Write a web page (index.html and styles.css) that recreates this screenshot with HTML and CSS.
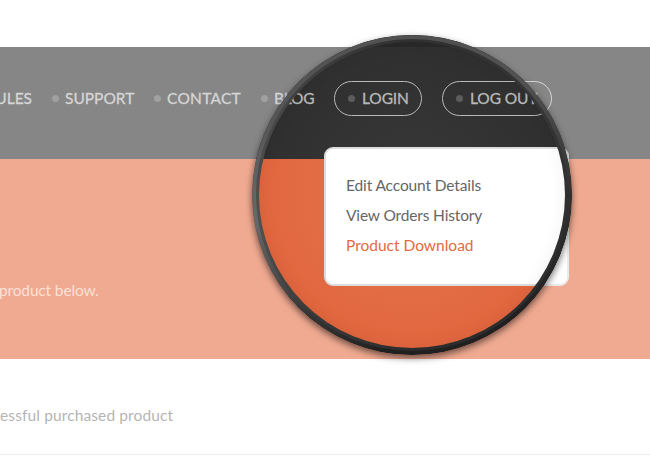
FILE: index.html
```html
<!DOCTYPE html>
<html lang="en">
<head>
<meta charset="utf-8">
<title>Product Download</title>
<link rel="stylesheet" href="styles.css">
</head>
<body>
<div class="page">
  <header class="header">
    <nav class="nav">
      <a class="item modules"><span>MODULES</span></a>
      <a class="item support"><i class="dot"></i><span>SUPPORT</span></a>
      <a class="item contact"><i class="dot"></i><span>CONTACT</span></a>
      <a class="item blog"><i class="dot"></i><span>BLOG</span></a>
      <a class="item pill login"><i class="dot"></i><span>LOGIN</span></a>
      <a class="item pill logout"><i class="dot"></i><span>LOG OUT</span></a>
    </nav>
    <div class="menu">
      <a class="edit">Edit Account Details</a>
      <a class="orders">View Orders History</a>
      <a class="active">Product Download</a>
    </div>
  </header>
  <section class="banner"><p>product below.</p></section>
  <section class="content"><p>essful purchased product</p></section>
  <div class="lens"><div class="rim"></div></div>
</div>
</body>
</html>
```
FILE: styles.css
```css
* { box-sizing: border-box; }
body { margin: 0; background: #fff; }
.page {
  position: relative;
  width: 650px;
  height: 464px;
  padding-top: 47px;
  overflow: hidden;
  font-family: Lato, "Liberation Sans", sans-serif;
  font-size: 15.5px;
  line-height: 30px;
}
.page p { margin: 0; white-space: nowrap; }
.header {
  position: relative;
  height: 112px;
  padding: 34px 98px 0 0;
  background: radial-gradient(circle at 411px 148px, #383838 0, #2f2f2f 160px);
}
.nav {
  display: flex;
  justify-content: flex-end;
  gap: 20px;
  height: 35px;
  color: #b9b9b9;
  -webkit-text-stroke: .3px;
}
.item {
  display: flex;
  align-items: center;
  flex-shrink: 0;
  gap: 6px;
  white-space: nowrap;
}
.item span { padding-bottom: 2px; }
.dot {
  width: 7px;
  height: 7px;
  flex-shrink: 0;
  border-radius: 50%;
  background: #5c5c5c;
}
.modules { width: 72px; justify-content: flex-end; }
.support { width: 82px; }
.contact { width: 87px; letter-spacing: .25px; }
.blog { width: 53px; letter-spacing: -.2px; }
.pill { border: 1px solid #b9b9b9; border-radius: 18px; padding-left: 13px; gap: 7px; letter-spacing: -.1px; }
.login { width: 88px; }
.logout { width: 110px; }
.menu {
  position: absolute;
  left: 324px;
  top: 100px;
  width: 245px;
  height: 139px;
  display: flex;
  flex-direction: column;
  padding: 21px 20px;
  border: 2px solid #dcdcdc;
  border-radius: 9px;
  background: #fff;
  color: #666;
}
.menu .edit { letter-spacing: -.12px; }
.menu .orders { letter-spacing: -.15px; }
.menu .active { color: #e5693f; }
.banner {
  height: 200px;
  padding-top: 116px;
  background: radial-gradient(circle at 411px 36px, #e5774e 0, #e1663e 154px, #e56d43 164px);
  color: #f8cbb9;
}
.banner p { margin-left: -1px; letter-spacing: -.15px; }
.content {
  height: 96px;
  padding-top: 41px;
  border-bottom: 1px solid #dedede;
  color: #7e7e7e;
  letter-spacing: .12px;
}
.lens {
  position: absolute;
  left: 252px;
  top: 35px;
  width: 320px;
  height: 320px;
  border-radius: 50%;
  background: linear-gradient(#282828 12px, transparent 12px);
  box-shadow: 0 3px 7px rgba(0, 0, 0, .55), 0 0 0 700px rgba(255, 255, 255, .42);
}
.rim {
  position: relative;
  width: 320px;
  height: 320px;
  border-radius: 50%;
  box-shadow: inset 0 0 18px 5px rgba(0, 0, 0, .07);
}
.rim::before,
.rim::after {
  content: "";
  position: absolute;
  inset: 0;
  padding: 7px;
  border-radius: 50%;
  background: conic-gradient(#303030 0deg, #363636 60deg, #303030 90deg, #2c2c2c 180deg, #3a3a3a 220deg, #505050 260deg, #464646 300deg, #303030 360deg);
  mask: linear-gradient(#000 0 0) content-box exclude, linear-gradient(#000 0 0);
}
.rim::after {
  padding: 4px;
  background: conic-gradient(#505050 0deg, #525252 45deg, #303030 90deg, #202020 140deg, #202020 190deg, #343434 220deg, #686868 260deg, #555 300deg, #505050 360deg);
}
```
